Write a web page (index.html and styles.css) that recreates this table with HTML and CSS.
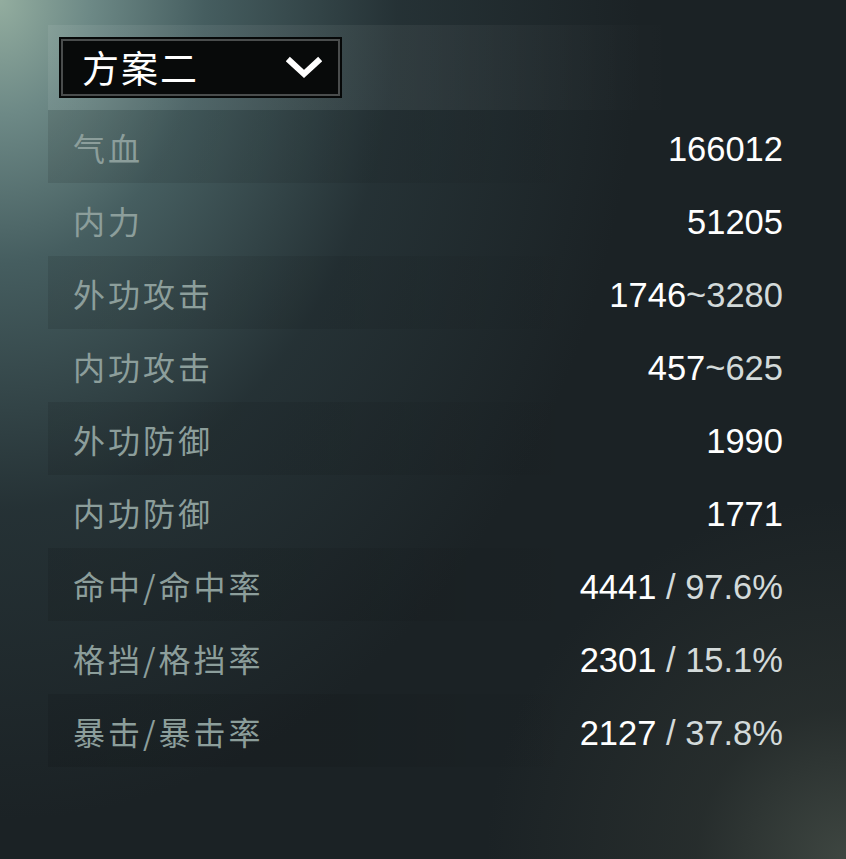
FILE: index.html
```html
<!DOCTYPE html>
<html>
<head>
    <meta charset="utf-8">
    <title>属性</title>
    <link rel="stylesheet" href="styles.css">
</head>
<body>
    <div class="panel">
        <!-- plan picker -->
        <div class="header">
            <div class="select">
                <span class="select-label">方案二</span>
                <svg class="chevron" width="36" height="24" viewBox="0 0 36 24">
                    <path d="M4 5 L18 18 L32 5" fill="none" stroke="#fff" stroke-width="6" stroke-linecap="square"/>
                </svg>
            </div>
        </div>
        <!-- stat rows -->
        <div class="row band">
            <span class="label">气血</span>
            <span class="value">166012</span>
        </div>
        <div class="row">
            <span class="label">内力</span>
            <span class="value">51205</span>
        </div>
        <div class="row band">
            <span class="label">外功攻击</span>
            <span class="value">1746<span class="dim">~3280</span></span>
        </div>
        <div class="row">
            <span class="label">内功攻击</span>
            <span class="value">457<span class="dim">~625</span></span>
        </div>
        <div class="row band">
            <span class="label">外功防御</span>
            <span class="value">1990</span>
        </div>
        <div class="row">
            <span class="label">内功防御</span>
            <span class="value">1771</span>
        </div>
        <div class="row band">
            <span class="label">命中/命中率</span>
            <span class="value">4441<span class="dim"> / 97.6%</span></span>
        </div>
        <div class="row">
            <span class="label">格挡/格挡率</span>
            <span class="value">2301<span class="dim"> / 15.1%</span></span>
        </div>
        <div class="row band">
            <span class="label">暴击/暴击率</span>
            <span class="value">2127<span class="dim"> / 37.8%</span></span>
        </div>
    </div>
</body>
</html>
```
FILE: styles.css
```css
html, body {
    height: 100%;
}
body {
    margin: 0;
    background:
        radial-gradient(ellipse 640px 820px at 0 0, #93ad9f 0, #6d8986 14%, rgba(74, 100, 102, 0.9) 32%, rgba(44, 60, 64, 0.6) 62%, rgba(30, 40, 44, 0) 100%),
        radial-gradient(circle at 100% 100%, #3e4641 0, rgba(50, 56, 52, 0.5) 150px, rgba(27, 34, 37, 0) 360px),
        #1b2225;
    font-family: "Noto Sans CJK SC", "Noto Sans", sans-serif;
}
.panel {
    width: 735px;
    padding: 25px 0 0 48px;
}
.header {
    height: 85px;
    padding: 12px 0 0 11px;
    box-sizing: border-box;
    background: linear-gradient(to right, rgba(255, 255, 255, 0.07), rgba(255, 255, 255, 0.05) 50%, rgba(255, 255, 255, 0) 85%);
}
.select {
    width: 283px;
    height: 61px;
    box-sizing: border-box;
    background-color: #080a0a;
    border: 2px solid #060808;
    box-shadow: inset 0 0 0 2px #4a4d4d;
    display: flex;
    align-items: center;
    justify-content: space-between;
    padding: 0 18px 0 21px;
}
.select-label {
    color: #fff;
    font-size: 37px;
    letter-spacing: 2px;
    line-height: 1;
}
.chevron {
    display: block;
}
.row {
    height: 73px;
    display: flex;
    align-items: center;
    justify-content: space-between;
    padding-left: 25px;
}
.band {
    background: linear-gradient(to right, rgba(0, 0, 0, 0.1), rgba(0, 0, 0, 0.08) 40%, rgba(0, 0, 0, 0) 75%);
}
.label {
    color: #8c9e9b;
    font-size: 32px;
    letter-spacing: 3px;
    line-height: 1;
}
.value {
    color: #fff;
    font-family: "Liberation Sans", Arial, sans-serif;
    font-size: 34.5px;
    line-height: 1;
    padding-top: 6px;
}
.dim {
    color: #d3dada;
}
```
